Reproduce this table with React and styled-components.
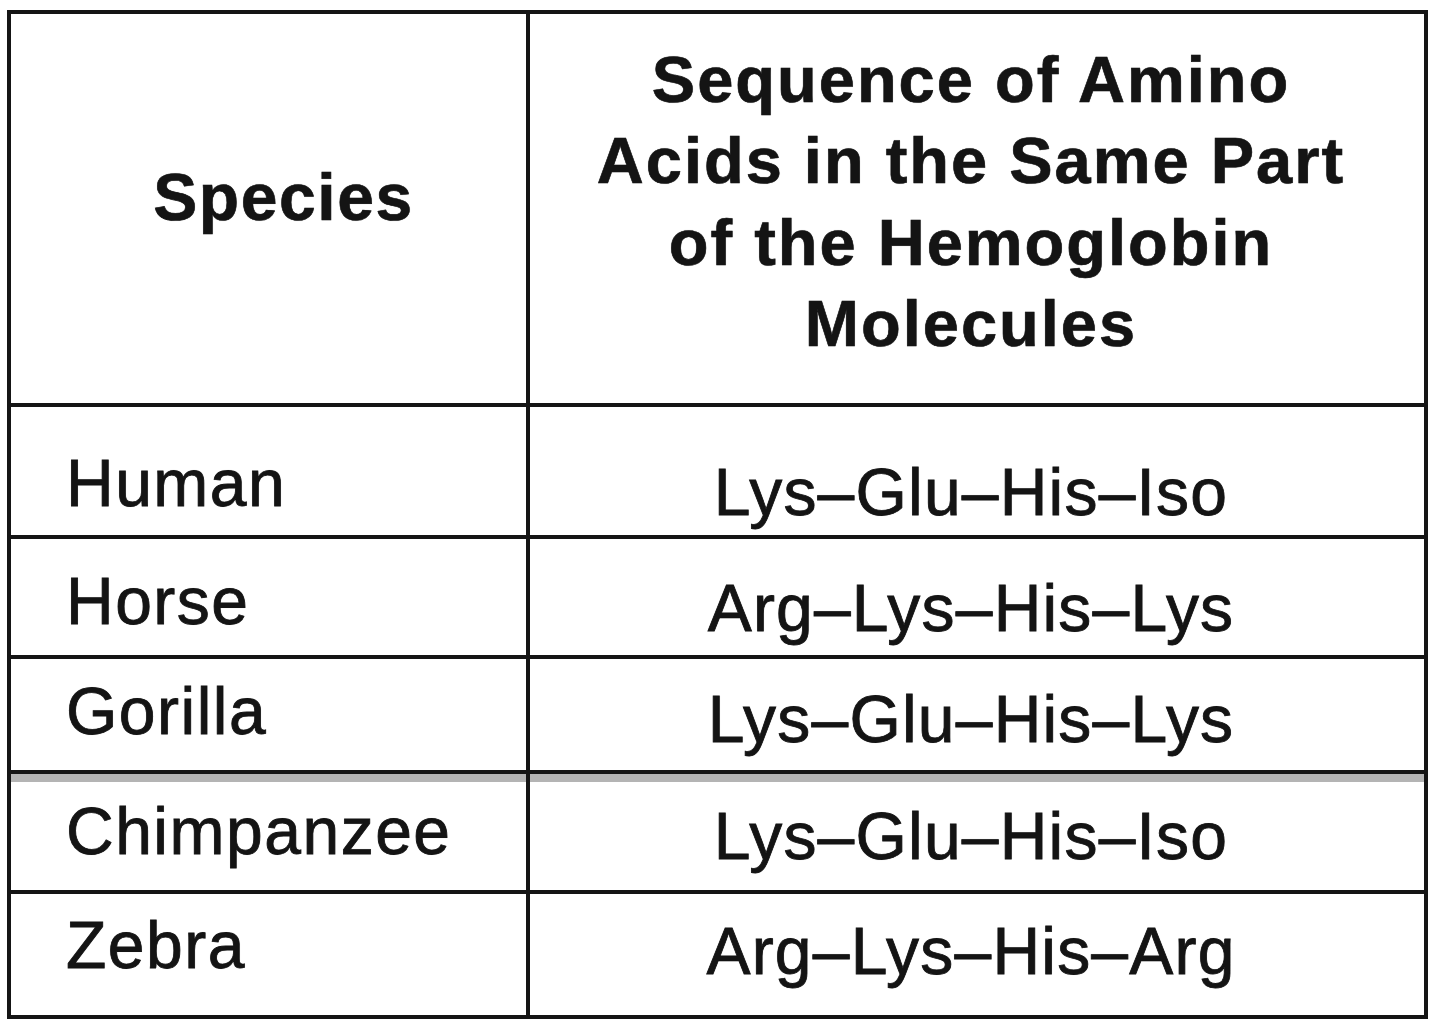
import { Fragment } from "react";
import styled, { createGlobalStyle } from "styled-components";

const GlobalStyle = createGlobalStyle`
  html, body {
    margin: 0;
    padding: 0;
    background: #ffffff;
  }
  body {
    font-family: "Liberation Sans", Arial, Helvetica, sans-serif;
    color: #141414;
  }
`;

// offsets follow the scanned page, where the print sits a little off-centre
const pad = (s) => `${Math.max(0, s * 2)}px 0 ${Math.max(0, -s * 2)}px`;

const Page = styled.div`
  width: 1440px;
  height: 1027px;
  overflow: hidden;
  padding: 10px 0 0 7px;
  box-sizing: border-box;
`;

const Sheet = styled.div`
  display: grid;
  grid-template-columns: 515px 894px;
  grid-template-rows: 389px 128px 116px 111px 116px 121px;
  gap: 4px;
  padding: 4px;
  width: fit-content;
  background: #151515;
`;

const Cell = styled.div`
  background: #ffffff;
  display: flex;
  align-items: center;
  box-sizing: border-box;
  padding: ${(p) => pad(p.$shift || 0)};
  box-shadow: ${(p) => (p.$smudge ? "inset 0 9px 0 -1px #b4b4b4" : "none")};
`;

const HeadCell = styled(Cell)`
  justify-content: center;
  text-align: center;
  font-weight: 700;
  font-size: 65px;
  line-height: 81.5px;
  letter-spacing: 2px;
  -webkit-text-stroke: 0.6px #141414;
  text-shadow: 0 0 1px rgba(0, 0, 0, 0.45);
`;

const SpeciesHead = styled(HeadCell)`
  font-size: 66px;
  letter-spacing: 1.6px;
  padding-left: 30px;
`;

const SeqHead = styled(HeadCell)`
  padding-right: 12px;
`;

const NameCell = styled(Cell)`
  font-size: 66px;
  line-height: 1;
  letter-spacing: 1.5px;
  padding-left: 55px;
  -webkit-text-stroke: 0.8px #141414;
  text-shadow: 0 0 1px rgba(0, 0, 0, 0.4);
`;

const SeqCell = styled(Cell)`
  justify-content: center;
  font-size: 66px;
  line-height: 1;
  letter-spacing: 1.2px;
  padding-right: 12px;
  -webkit-text-stroke: 0.8px #141414;
  text-shadow: 0 0 1px rgba(0, 0, 0, 0.4);
`;

const rows = [
  { name: "Human", seq: "Lys–Glu–His–Iso", left: 12, right: 21 },
  { name: "Horse", seq: "Arg–Lys–His–Lys", left: 4, right: 11 },
  { name: "Gorilla", seq: "Lys–Glu–His–Lys", left: -4, right: 4 },
  { name: "Chimpanzee", seq: "Lys–Glu–His–Iso", left: -1, right: 4, smudge: true },
  { name: "Zebra", seq: "Arg–Lys–His–Arg", left: -10, right: -4 },
];

export default function App() {
  return (
    <>
      <GlobalStyle />
      <Page>
        <Sheet>
          <SpeciesHead $shift={-11}>Species</SpeciesHead>
          <SeqHead $shift={-7}>
            Sequence of Amino
            <br />
            Acids in the Same Part
            <br />
            of the Hemoglobin
            <br />
            Molecules
          </SeqHead>
          {rows.map((r) => (
            <Fragment key={r.name}>
              <NameCell $shift={r.left} $smudge={r.smudge}>
                {r.name}
              </NameCell>
              <SeqCell $shift={r.right} $smudge={r.smudge}>
                {r.seq}
              </SeqCell>
            </Fragment>
          ))}
        </Sheet>
      </Page>
    </>
  );
}
